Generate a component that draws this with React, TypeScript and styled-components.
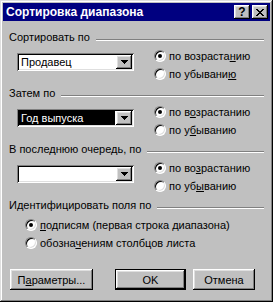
import React from 'react';
import styled, { createGlobalStyle } from 'styled-components';

const GlobalStyle = createGlobalStyle`
  html, body {
    margin: 0;
    padding: 0;
    background: #c0c0c0;
  }
`;

const raised = `
  box-shadow: inset -1px -1px #000, inset 1px 1px #fff, inset -2px -2px #808080, inset 2px 2px #dfdfdf;
`;

const Window = styled.div`
  width: 273px;
  height: 302px;
  box-sizing: border-box;
  padding: 3px;
  background: #c0c0c0;
  box-shadow: inset -1px -1px #000, inset 1px 1px #dfdfdf, inset -2px -2px #808080, inset 2px 2px #fff;
  display: flex;
  flex-direction: column;
  font-family: "Liberation Sans", Arial, sans-serif;
  font-size: 11px;
  color: #000;
`;

const TitleBar = styled.div`
  height: 18px;
  background: #000080;
  color: #fff;
  display: flex;
  align-items: center;
  padding: 0 2px 0 3px;
  font-weight: bold;
  font-size: 12px;
`;

const Title = styled.span`
  flex: 1;
`;

const TitleButton = styled.div<{ $gap?: number }>`
  width: 16px;
  height: 14px;
  box-sizing: border-box;
  background: #c0c0c0;
  ${raised}
  display: flex;
  align-items: center;
  justify-content: center;
  margin-left: ${p => p.$gap ?? 0}px;
  color: #000;
  font-size: 12px;
  font-weight: bold;
  line-height: 14px;
`;

const Content = styled.div`
  flex: 1;
  display: flex;
  flex-direction: column;
  padding: 10px 6px 0 6px;
`;

const Section = styled.section`
  margin-bottom: 4px;
`;

const Header = styled.div`
  display: flex;
  align-items: center;
  height: 13px;
  line-height: 13px;
  white-space: nowrap;
`;

const Rule = styled.div`
  flex: 1;
  height: 0;
  border-top: 1px solid #808080;
  border-bottom: 1px solid #fff;
  margin: 4px 0 0 6px;
`;

const Body = styled.div`
  display: flex;
  margin-top: 3px;
  height: 36px;
`;

const ComboSlot = styled.div`
  width: 145px;
  box-sizing: border-box;
  padding: 6px 0 0 8px;
`;

const Combo = styled.div`
  width: 117px;
  height: 18px;
  box-sizing: border-box;
  padding: 2px;
  background: #fff;
  box-shadow: inset 1px 1px #808080, inset -1px -1px #fff, inset 2px 2px #000, inset -2px -2px #dfdfdf;
  display: flex;
`;

const ComboText = styled.div<{ $selected?: boolean }>`
  flex: 1;
  margin-right: 1px;
  padding-left: 2px;
  line-height: 14px;
  background: ${p => (p.$selected ? '#000' : 'transparent')};
  color: ${p => (p.$selected ? '#fff' : '#000')};
  white-space: nowrap;
  overflow: hidden;
`;

const DropButton = styled.div`
  width: 16px;
  height: 14px;
  box-sizing: border-box;
  background: #c0c0c0;
  ${raised}
  display: flex;
  align-items: center;
  justify-content: center;
`;

const RadioGroup = styled.div<{ $indent?: number; $top?: number }>`
  display: flex;
  flex-direction: column;
  padding-left: ${p => p.$indent ?? 0}px;
  margin-top: ${p => p.$top ?? 0}px;
`;

const RadioRow = styled.label`
  display: flex;
  align-items: center;
  height: 18px;
  gap: 3px;
  white-space: nowrap;
`;

const RadioCircle = styled.span<{ $checked?: boolean }>`
  position: relative;
  width: 12px;
  height: 12px;
  box-sizing: border-box;
  border-radius: 50%;
  background: #fff;
  border: 1px solid;
  border-color: #808080 #fff #fff #808080;
  box-shadow: inset 1px 1px #000, inset -1px -1px #dfdfdf;
  flex: none;

  &::after {
    content: '';
    display: ${p => (p.$checked ? 'block' : 'none')};
    position: absolute;
    left: 3px;
    top: 3px;
    width: 4px;
    height: 4px;
    border-radius: 50%;
    background: #000;
  }
`;

const U = styled.span`
  text-decoration: underline;
`;

const ButtonRow = styled.div`
  display: flex;
  margin-top: 13px;
  padding-left: 1px;
`;

const Button = styled.button<{ $width: number; $default?: boolean; $gap?: number }>`
  width: ${p => p.$width}px;
  height: 21px;
  box-sizing: border-box;
  margin: 0 0 0 ${p => p.$gap ?? 0}px;
  padding: 0;
  font-family: "Liberation Sans", Arial, sans-serif;
  font-size: 11px;
  color: #000;
  background: #c0c0c0;
  border: ${p => (p.$default ? '1px solid #000' : 'none')};
  ${raised}
`;

const CloseGlyph = () => (
  <svg width="8" height="7" viewBox="0 0 8 7" shapeRendering="crispEdges">
    <path
      d="M0 0h2v1h-2zM6 0h2v1h-2zM1 1h2v1h-2zM5 1h2v1h-2zM2 2h4v1h-4zM3 3h2v1h-2zM2 4h4v1h-4zM1 5h2v1h-2zM5 5h2v1h-2zM0 6h2v1h-2zM6 6h2v1h-2z"
      fill="#000"
    />
  </svg>
);

const Arrow = () => (
  <svg width="7" height="4" viewBox="0 0 7 4" shapeRendering="crispEdges">
    <path d="M0 0h7v1h-1v1h-1v1h-1v1h-1v-1h-1v-1h-1v-1h-1z" fill="#000" />
  </svg>
);

type SortKey = {
  label: string;
  value: string;
  selected?: boolean;
  asc: React.ReactNode;
  desc: React.ReactNode;
};

const keys: SortKey[] = [
  {
    label: 'Сортировать по',
    value: 'Продавец',
    asc: <>по возраста<U>н</U>ию</>,
    desc: <>по убывани<U>ю</U></>,
  },
  {
    label: 'Затем по',
    value: 'Год выпуска',
    selected: true,
    asc: <>по в<U>о</U>зрастанию</>,
    desc: <>по у<U>б</U>ыванию</>,
  },
  {
    label: 'В последнюю очередь, по',
    value: '',
    asc: <>по во<U>з</U>растанию</>,
    desc: <>по уб<U>ы</U>ванию</>,
  },
];

const App: React.FC = () => (
  <>
    <GlobalStyle />
    <Window>
      <TitleBar>
        <Title>Сортировка диапазона</Title>
        <TitleButton>?</TitleButton>
        <TitleButton $gap={2}>
          <CloseGlyph />
        </TitleButton>
      </TitleBar>
      <Content>
        {keys.map(k => (
          <Section key={k.label}>
            <Header>
              {k.label}
              <Rule />
            </Header>
            <Body>
              <ComboSlot>
                <Combo>
                  <ComboText $selected={k.selected}>{k.value}</ComboText>
                  <DropButton>
                    <Arrow />
                  </DropButton>
                </Combo>
              </ComboSlot>
              <RadioGroup>
                <RadioRow>
                  <RadioCircle $checked />
                  <span>{k.asc}</span>
                </RadioRow>
                <RadioRow>
                  <RadioCircle />
                  <span>{k.desc}</span>
                </RadioRow>
              </RadioGroup>
            </Body>
          </Section>
        ))}
        <Section>
          <Header>
            Идентифицировать поля по
            <Rule />
          </Header>
          <RadioGroup $indent={16} $top={4}>
            <RadioRow>
              <RadioCircle $checked />
              <span><U>п</U>одписям (первая строка диапазона)</span>
            </RadioRow>
            <RadioRow>
              <RadioCircle />
              <span>обозна<U>ч</U>ениям столбцов листа</span>
            </RadioRow>
          </RadioGroup>
        </Section>
        <ButtonRow>
          <Button $width={83}>П<U>а</U>раметры...</Button>
          <Button $width={71} $gap={22} $default>OK</Button>
          <Button $width={62} $gap={7}>Отмена</Button>
        </ButtonRow>
      </Content>
    </Window>
  </>
);

export default App;
